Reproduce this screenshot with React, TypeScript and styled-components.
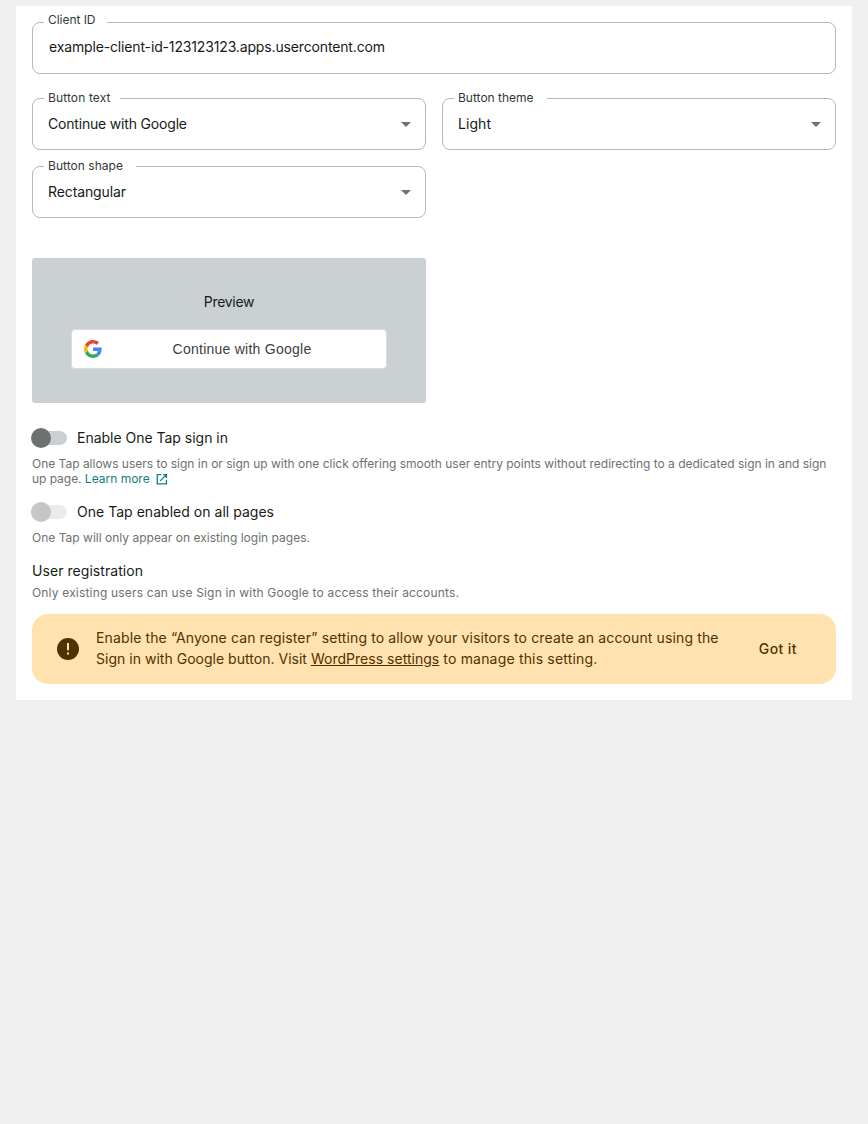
import React from 'react';
import styled, { createGlobalStyle } from 'styled-components';

const GlobalStyle = createGlobalStyle`
  *, *::before, *::after { box-sizing: border-box; }
  body {
    margin: 0;
    background: #f0f0f0;
    color: #161b18;
    font-family: Inter, 'Liberation Sans', sans-serif;
    font-size: 14px;
  }
`;

const Track = styled.span<{ $track?: number }>`
  letter-spacing: ${({ $track = 0 }) => $track}px;
`;

const ControlText = styled(Track)`
  padding-bottom: 2px;
`;

const Panel = styled.main`
  margin: 6px 16px 0;
  height: 694px;
  padding: 16px 16px 0;
  background: #fff;
`;

const FieldGrid = styled.div`
  display: grid;
  grid-template-columns: 1fr 1fr;
  gap: 16px;
  margin-top: 24px;
`;

const Field = styled.div<{ $input?: boolean }>`
  position: relative;
  display: flex;
  align-items: center;
  justify-content: space-between;
  height: 52px;
  padding: 0 14px ${({ $input }) => ($input ? '2px 16px' : '0 15px')};
  border: 1px solid #b5b8b8;
  border-radius: 8px;
`;

const Label = styled.label<{ $notch: number; $track: number; $top?: number }>`
  position: absolute;
  top: ${({ $top = -9 }) => $top}px;
  left: 11px;
  width: ${({ $notch }) => $notch}px;
  padding-left: 4px;
  background: #fff;
  color: #333937;
  font-size: 12px;
  line-height: 16px;
  letter-spacing: ${({ $track }) => $track}px;
  white-space: nowrap;
`;

const Arrow = styled.span`
  width: 0;
  height: 0;
  border: 5px solid transparent;
  border-top-color: #707070;
  border-bottom: 0;
`;

const Preview = styled.section`
  display: flex;
  flex-direction: column;
  align-items: center;
  width: 394px;
  height: 145px;
  margin-top: 40px;
  padding-top: 34px;
  border-radius: 3px;
  background: #cbd0d3;
  line-height: 20px;
`;

const GoogleButton = styled.button`
  display: flex;
  align-items: center;
  width: 316px;
  height: 40px;
  margin-top: 17px;
  padding: 0 12px;
  border: 1px solid #dadce0;
  border-radius: 4px;
  background: #fff;
  color: #3c4043;
  font: 14px 'Liberation Sans', Arial, sans-serif;
  letter-spacing: 0.25px;
`;

const ButtonCaption = styled.span`
  flex: 1;
  padding-left: 8px;
  text-align: center;
`;

const SwitchRow = styled.div<{ $gap: number }>`
  display: flex;
  align-items: center;
  height: 20px;
  margin-top: ${({ $gap }) => $gap}px;
  margin-left: -1px;
`;

const Switch = styled.span<{ $disabled?: boolean }>`
  display: flex;
  align-items: center;
  width: 32px;
  height: 14px;
  margin: 0 10px 0 4px;
  border-radius: 7px;
  background: ${({ $disabled }) => ($disabled ? '#ebeced' : '#cbd0d3')};

  &::before {
    content: '';
    flex: none;
    width: 20px;
    height: 20px;
    margin-left: -4px;
    border-radius: 50%;
    background: ${({ $disabled }) => ($disabled ? '#c4c7c6' : '#6c726e')};
  }
`;

const Help = styled.p<{ $gap: number; $track?: number }>`
  margin: ${({ $gap }) => $gap}px 0 0;
  color: #6c726e;
  font-size: 12px;
  line-height: 15px;
  letter-spacing: ${({ $track = 0 }) => $track}px;
  white-space: nowrap;
`;

const LearnMore = styled.a`
  color: #108080;

  svg {
    margin-left: 6px;
    vertical-align: -2px;
  }
`;

const SectionTitle = styled.h2`
  margin: 16px 0 0;
  font-size: 14px;
  font-weight: 400;
  line-height: 20px;
  letter-spacing: 0.057px;
`;

const Notice = styled.aside`
  display: flex;
  align-items: center;
  height: 70px;
  margin-top: 14px;
  padding: 0 39px 0 25px;
  border-radius: 16px;
  background: #ffe2b0;
  color: #4e3300;
`;

const NoticeText = styled.p`
  flex: 1;
  margin: 0 0 2px 17px;
  line-height: 21px;
  white-space: nowrap;

  a { text-decoration: underline; }
`;

const Dismiss = styled.button`
  padding: 0 0 2px;
  border: 0;
  background: none;
  color: inherit;
  font: 500 14px Inter, sans-serif;
  letter-spacing: 0.42px;
`;

const GoogleLogo = () => (
  <svg width="18" height="18" viewBox="0 0 48 48">
    <path fill="#EA4335" d="M24 9.5c3.54 0 6.71 1.22 9.21 3.6l6.85-6.85C35.9 2.38 30.47 0 24 0 14.62 0 6.51 5.38 2.56 13.22l7.98 6.19C12.43 13.72 17.74 9.5 24 9.5z" />
    <path fill="#4285F4" d="M46.98 24.55c0-1.57-.15-3.09-.38-4.55H24v9.02h12.94c-.58 2.96-2.26 5.48-4.78 7.18l7.73 6c4.51-4.18 7.09-10.36 7.09-17.65z" />
    <path fill="#FBBC05" d="M10.53 28.59c-.48-1.45-.76-2.99-.76-4.59s.27-3.14.76-4.59l-7.98-6.19C.92 16.46 0 20.12 0 24c0 3.88.92 7.54 2.56 10.78l7.97-6.19z" />
    <path fill="#34A853" d="M24 48c6.48 0 11.93-2.13 15.89-5.81l-7.73-6c-2.15 1.45-4.92 2.3-8.16 2.3-6.26 0-11.57-4.22-13.47-9.91l-7.98 6.19C6.51 42.62 14.62 48 24 48z" />
  </svg>
);

const ExternalIcon = () => (
  <svg width="12" height="12" viewBox="0 0 12 12" fill="none" stroke="currentColor" strokeWidth="1.3">
    <path d="M5.2 1.65H1.25v9.2h9.2V6.8M7.2 1.65h3.25v3.25M10.3 1.8 4.2 7.9" />
  </svg>
);

const WarningIcon = () => (
  <svg width="22" height="22" viewBox="0 0 22 22">
    <circle cx="11" cy="11" r="11" fill="#4e3300" />
    <path fill="#ffe2b0" d="M10 5h2v7.2h-2zM10 14.4h2v2.2h-2z" />
  </svg>
);

type SelectProps = { label: string; value: string; notch: number; labelTrack: number; track: number };

const SelectField = ({ label, value, notch, labelTrack, track }: SelectProps) => (
  <Field>
    <Label $notch={notch} $track={labelTrack}>{label}</Label>
    <ControlText $track={track}>{value}</ControlText>
    <Arrow />
  </Field>
);

export default function App() {
  return (
    <>
      <GlobalStyle />
      <Panel>
        <Field $input>
          <Label $notch={63} $track={-0.04} $top={-11}>Client ID</Label>
          <ControlText $track={-0.149}>example-client-id-123123123.apps.usercontent.com</ControlText>
        </Field>
        <FieldGrid>
          <SelectField label="Button text" value="Continue with Google" notch={76} labelTrack={0.12} track={-0.186} />
          <SelectField label="Button theme" value="Light" notch={93} labelTrack={0} track={0.06} />
          <SelectField label="Button shape" value="Rectangular" notch={92} labelTrack={0.04} track={-0.113} />
        </FieldGrid>
        <Preview>
          <Track $track={-0.3}>Preview</Track>
          <GoogleButton>
            <GoogleLogo />
            <ButtonCaption>Continue with Google</ButtonCaption>
          </GoogleButton>
        </Preview>
        <SwitchRow $gap={25}>
          <Switch />
          <ControlText $track={-0.015}>Enable One Tap sign in</ControlText>
        </SwitchRow>
        <Help $gap={8}>
          <Track $track={-0.011}>
            One Tap allows users to sign in or sign up with one click offering smooth user entry points without
            redirecting to a dedicated sign in and sign
          </Track>
          <br />
          <Track $track={-0.04}>up page. </Track>
          <LearnMore>Learn more<ExternalIcon /></LearnMore>
        </Help>
        <SwitchRow $gap={16}>
          <Switch $disabled />
          <ControlText $track={0.027}>One Tap enabled on all pages</ControlText>
        </SwitchRow>
        <Help $gap={8} $track={0.012}>One Tap will only appear on existing login pages.</Help>
        <SectionTitle>User registration</SectionTitle>
        <Help $gap={4} $track={0.178}>
          Only existing users can use Sign in with Google to access their accounts.
        </Help>
        <Notice>
          <WarningIcon />
          <NoticeText>
            <Track $track={0.127}>
              Enable the “Anyone can register” setting to allow your visitors to create an account using the
            </Track>
            <br />
            <Track $track={0.02}>Sign in with Google button. Visit </Track>
            <a><Track $track={0.02}>WordPress settings</Track></a>
            <Track $track={0.179}> to manage this setting.</Track>
          </NoticeText>
          <Dismiss>Got it</Dismiss>
        </Notice>
      </Panel>
    </>
  );
}
